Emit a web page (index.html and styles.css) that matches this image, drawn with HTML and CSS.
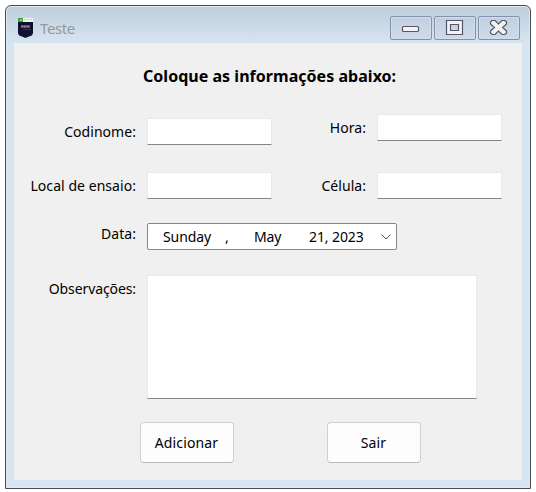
FILE: index.html
```html
<!DOCTYPE html>
<html lang="pt">
<head>
<meta charset="utf-8">
<title>Teste</title>
<link rel="stylesheet" href="styles.css">
</head>
<body>
<div class="window">
  <header class="titlebar">
    <svg class="app-icon" width="16" height="21" viewBox="0 0 16 21">
      <path d="M0 4H15V15Q14.500 18 11 18.500L7.500 20L4 18.500Q.5 18 0 15Z" fill="#11112f"/>
      <path d="M0 0H15V4H0Z" fill="#f2f5f4"/>
      <path d="M0 0H5V4H0Z" fill="#36a63a"/>
      <path d="M2 1H4V3H2Z" fill="#7dc97d"/>
      <path d="M6 1.500H14" stroke="#b9cfc0" stroke-dasharray="2 1"/>
      <path d="M3 7H12V10H3Z" fill="#58576b"/>
      <path d="M3 8.500H12" stroke="#8a8898" stroke-dasharray="2 1"/>
      <path d="M5 11.500H13" stroke="#5a2038"/>
    </svg>
    <span class="caption">Teste</span>
    <div class="controls">
      <button class="control" aria-label="Minimizar">
        <svg width="40" height="22" viewBox="0 0 40 22">
          <rect x="11.500" y="9.500" width="16" height="5" rx="1" class="glyph"/>
        </svg>
      </button>
      <button class="control" aria-label="Maximizar">
        <svg width="40" height="22" viewBox="0 0 40 22">
          <path d="M11.500 3.500H27.500V17.500H11.500ZM15.500 7.500V13.500H23.500V7.500Z" class="glyph" fill-rule="evenodd"/>
        </svg>
      </button>
      <button class="control" aria-label="Fechar">
        <svg width="40" height="22" viewBox="0 0 40 22">
          <path d="M13 3.500H16L19.500 7L23 3.500H26L27.500 5V7L23.500 10.500L27.500 14V16L26 17.500H23L19.500 14L16 17.500H13L11.500 16V14L15.500 10.500L11.500 7V5Z" class="glyph"/>
        </svg>
      </button>
    </div>
  </header>
  <main class="client">
    <h1 class="heading">Coloque as informações abaixo:</h1>
    <div class="form">
      <label class="label codinome" for="codinome">Codinome:</label>
      <input class="input codinome" id="codinome">
      <label class="label" for="hora">Hora:</label>
      <input class="input" id="hora">
      <label class="label" for="local">Local de ensaio:</label>
      <input class="input" id="local">
      <label class="label" for="celula">Célula:</label>
      <input class="input" id="celula">
      <span class="label data">Data:</span>
      <div class="date">
        <span class="weekday">Sunday</span><span class="comma">,</span><span class="month">May</span><span class="day">21, 2023</span>
        <svg class="chevron" width="10" height="6" viewBox="0 0 10 6"><path d="M.5 .5L5 5L9.500 .5"/></svg>
      </div>
      <label class="label observacoes" for="obs">Observações:</label>
      <textarea class="input notes" id="obs"></textarea>
    </div>
    <div class="actions">
      <button class="button">Adicionar</button>
      <button class="button">Sair</button>
    </div>
  </main>
</div>
</body>
</html>
```
FILE: styles.css
```css
* { box-sizing: border-box; }
body {
  margin: 0;
  padding: 5px;
  background: #fff;
  font: 14px/20px "Noto Sans", "Open Sans", sans-serif;
  color: #000;
}
.window {
  width: 526px;
  height: 484px;
  padding: 0 8px 8px;
  border: 1px solid #4b4a50;
  border-radius: 6px 6px 0 0;
  background: linear-gradient(#bfcddb, #d7e4f2 37px);
  box-shadow: inset 0 0 0 1px #e0eaf5;
}
.titlebar {
  display: flex;
  height: 37px;
  padding: 10px 2px 0 4px;
  align-items: flex-start;
}
.app-icon { margin-top: 2px; }
.caption {
  margin: 2px 0 0 6px;
  color: #96999c;
  font-size: 15px;
  letter-spacing: -.4px;
}
.controls { display: flex; gap: 2px; margin-left: auto; }
.control {
  width: 42px;
  height: 24px;
  padding: 0;
  border: 1px solid #8391ae;
  border-radius: 2px;
  background: linear-gradient(#c2cfdf, #cedbe9);
  box-shadow: inset 0 0 0 1px #d3deeb;
}
.control svg { display: block; }
.glyph { fill: #f3f3f3; stroke: #555667; stroke-width: 1.200; }
.client { height: 437px; background: #f0f0f0; }
.heading {
  height: 71px;
  margin: 0;
  padding: 23px 0 0 129px;
  font-size: 16px;
  line-height: 20px;
  letter-spacing: .03px;
  white-space: nowrap;
}
.form {
  display: grid;
  grid-template-columns: 123px 135px 95px 135px;
  grid-template-rows: 31px 27px 27px 123px;
  row-gap: 27px;
}
.label {
  height: 20px;
  margin-top: 4px;
  padding-right: 1px;
  text-align: right;
  letter-spacing: .05px;
  white-space: nowrap;
}
.label.codinome { margin-top: 8px; }
.label.data { margin-top: -2px; }
.label.observacoes { margin-top: -1px; letter-spacing: -.1px; }
.input {
  display: block;
  width: 125px;
  height: 27px;
  margin: 0 0 0 10px;
  padding: 2px 4px;
  border: 1px solid #e9e9e9;
  border-bottom-color: #868686;
  border-radius: 1px;
  outline: 0;
  background: #fff;
  font: inherit;
  resize: none;
}
.input.codinome { margin-top: 4px; }
.input.notes {
  grid-column: 2 / -1;
  width: 330px;
  height: 124px;
  margin-top: -5px;
}
.date {
  display: flex;
  grid-column: 2 / -1;
  width: 250px;
  height: 27px;
  margin: -3px 0 0 10px;
  padding: 3px 5px 0 15px;
  border: 1px solid #868686;
  border-radius: 2px;
  background: #fff;
  letter-spacing: -.1px;
}
.weekday { width: 62px; }
.comma { width: 29px; }
.month { width: 55px; }
.chevron { margin: 7px 0 0 auto; fill: none; stroke: #555; }
.actions { display: flex; gap: 93px; margin: 19px 0 0 126px; }
.button {
  width: 94px;
  height: 41px;
  padding: 0 1px 0 0;
  border: 1px solid #d0d0d0;
  border-bottom-color: #bbb;
  border-radius: 4px;
  background: #fdfdfd;
  font: inherit;
  letter-spacing: .15px;
}
```
